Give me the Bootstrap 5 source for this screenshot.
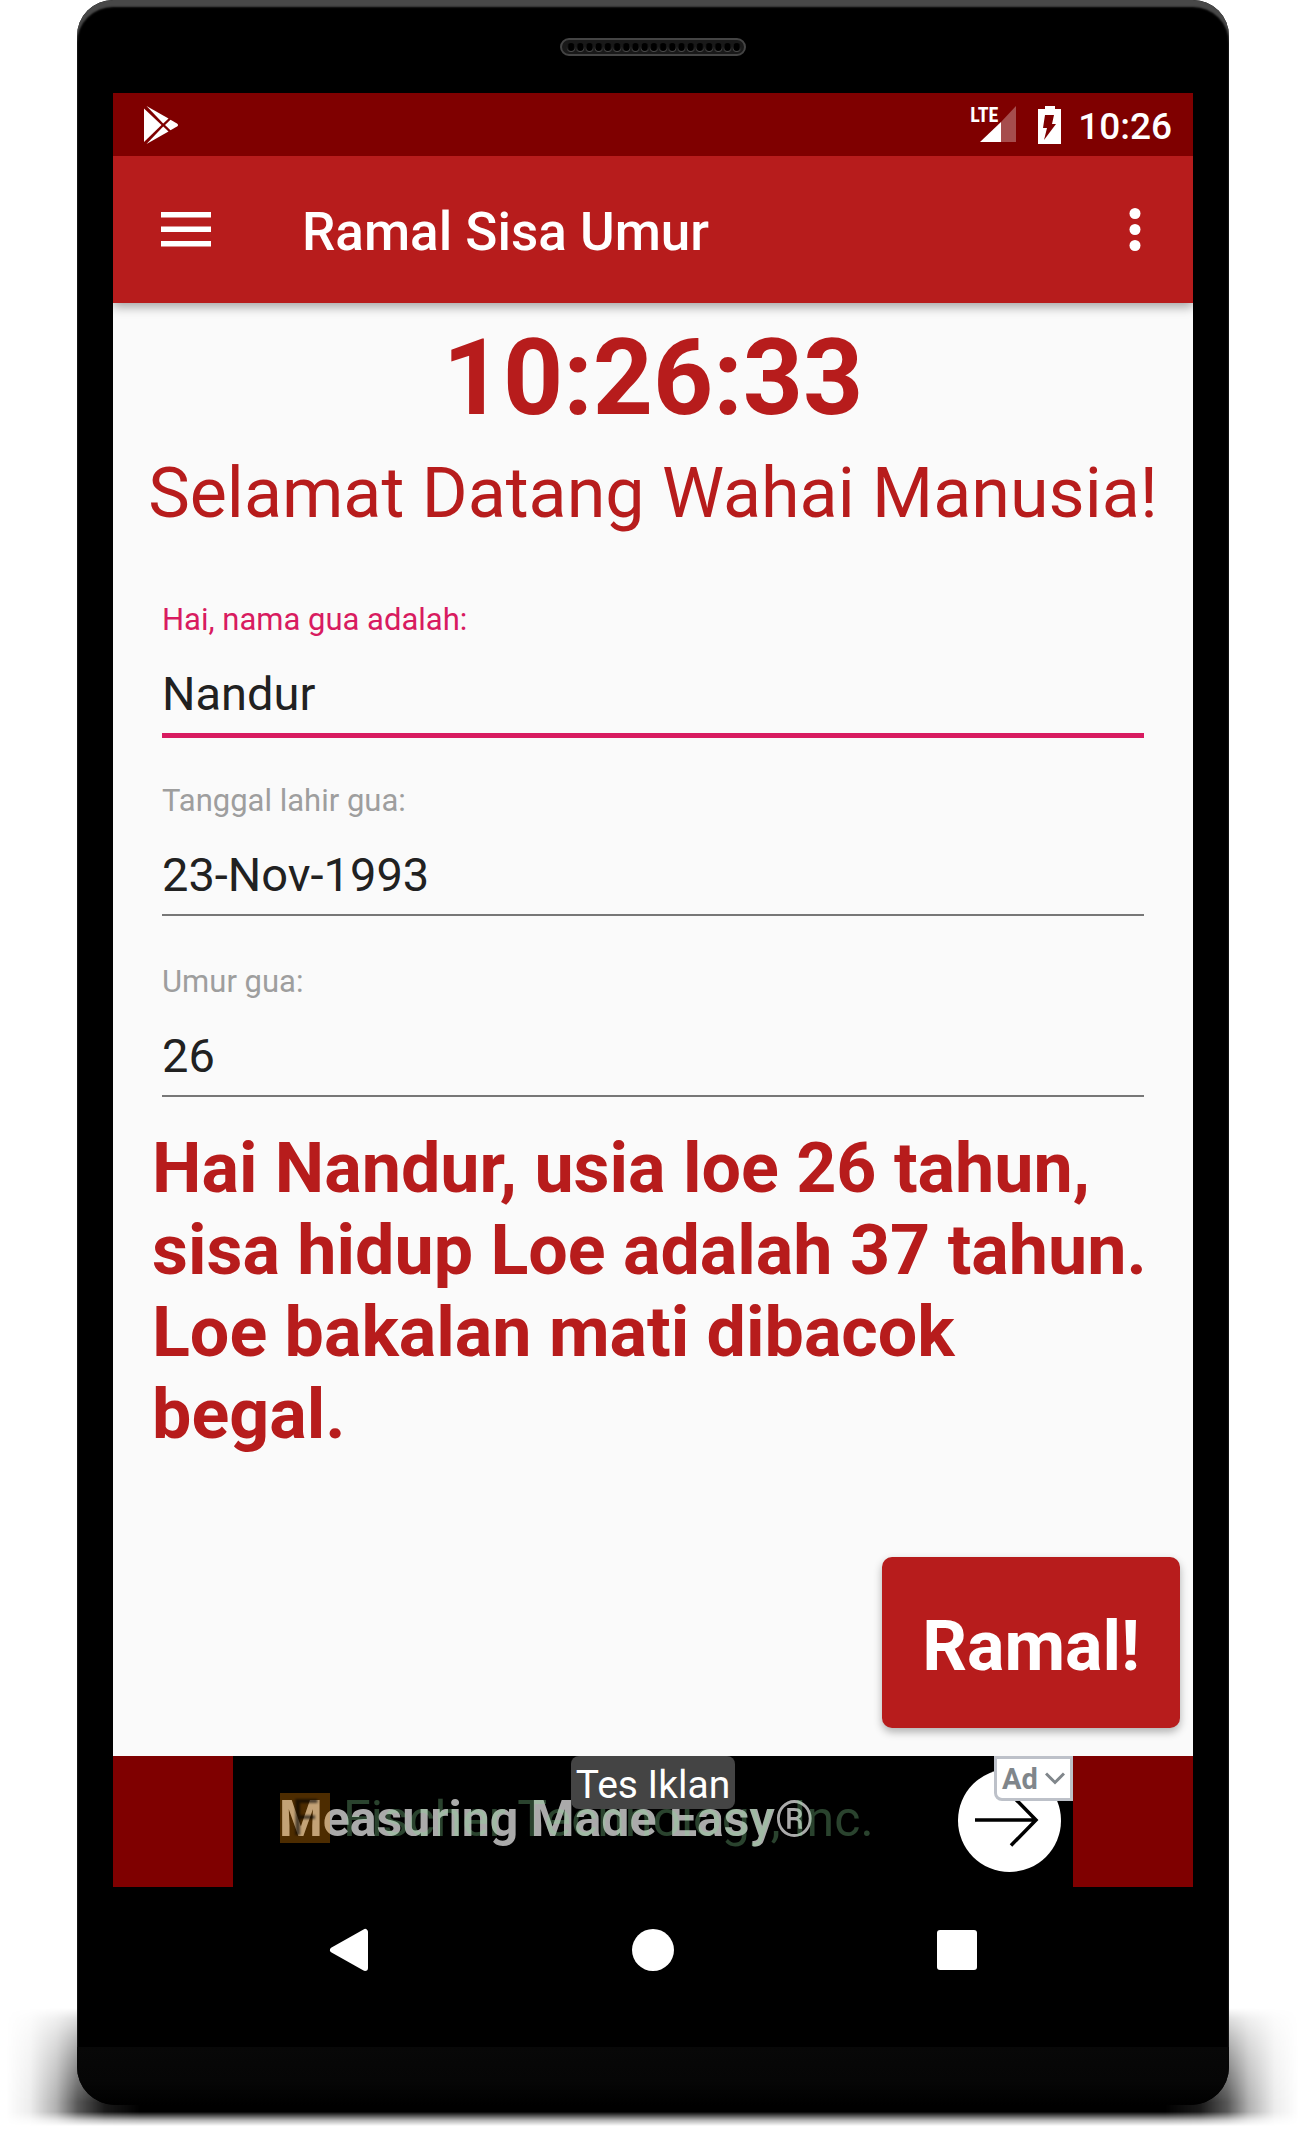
<!DOCTYPE html>
<html lang="id">
<head>
<meta charset="utf-8">
<meta name="viewport" content="width=device-width, initial-scale=1">
<title>Ramal Sisa Umur</title>
<link href="https://cdn.jsdelivr.net/npm/bootstrap@5.3.0/dist/css/bootstrap.min.css" rel="stylesheet">
<style>
  :root { --red: #b71c1c; --maroon: #7f0000; --pink: #d81b60; }
  body { font-family: Roboto, "Liberation Sans", sans-serif; background: #fff; }

  /* Device */
  .stage { min-height: 100vh; padding: 0 76px 25px 77px; }
  .ground-shadow {
    left: 0; right: 0; bottom: 4px; height: 118px;
    background: linear-gradient(to right, transparent 6px, rgba(0,0,0,.07) 30px, rgba(0,0,0,.3) 56px, rgba(0,0,0,.66) 78px, rgba(0,0,0,.9) 105px, #000 140px, #000 calc(100% - 140px), rgba(0,0,0,.9) calc(100% - 105px), rgba(0,0,0,.66) calc(100% - 78px), rgba(0,0,0,.3) calc(100% - 56px), rgba(0,0,0,.07) calc(100% - 30px), transparent calc(100% - 6px));
    -webkit-mask-image: linear-gradient(to bottom, transparent, rgba(0,0,0,.2) 9%, rgba(0,0,0,.42) 25%, rgba(0,0,0,.65) 45%, #000 80%, #000 88%, rgba(0,0,0,.3) 95%, transparent);
    mask-image: linear-gradient(to bottom, transparent, rgba(0,0,0,.2) 9%, rgba(0,0,0,.42) 25%, rgba(0,0,0,.65) 45%, #000 80%, #000 88%, rgba(0,0,0,.3) 95%, transparent);
  }
  .phone { background: #000; border-radius: 36px 36px 38px 38px; box-shadow: inset 0 7px 2px #484848; overflow: hidden; }
  .phone-top { height: 93px; }
  .phone-body { padding: 0 36px; }
  .chin { height: 58px; margin-top: 34px; background: linear-gradient(#080808, #060606 60%, #000); }

  /* System bar */
  .status-row { background: var(--maroon); height: 63px; padding: 0 21px 0 31px; }
  .status-time { font-size: 37px; font-weight: 500; line-height: 44px; padding-top: 5px; }
  .signal { width: 48px; height: 40px; margin-right: 18px; }
  .battery { margin-right: 14px; }
  .signal-tag { font: bold 20px/16px "Liberation Sans Narrow", "Roboto Condensed", Roboto, sans-serif; left: 0; top: 2px; }

  /* App bar */
  .app-row { background: var(--red); height: 147px; padding: 0 40px 0 48px; box-shadow: 0 4px 10px rgba(0,0,0,.35); z-index: 1; clip-path: inset(0 0 -20px 0); }
  .app-title { font-size: 53px; font-weight: 500; line-height: 62px; margin-left: 91px; padding-top: 4px; }
  .plain-btn { background: none; border: 0; padding: 0; line-height: 0; color: #fff; }

  /* Page */
  .page { background: #fafafa; color: var(--red); padding: 14px 13px 28px; }
  .clock { font-size: 105px; font-weight: 700; line-height: 123px; margin: 0 0 12px; }
  .greeting { font-size: 70px; line-height: 82px; margin: 0 0 66px; }
  .fields { margin: 0 36px; }
  .field-item { min-height: 138px; margin-bottom: 43px; }
  .field-item:last-child { margin-bottom: 27px; }
  .field-item label { display: block; font-size: 31px; line-height: 40px; margin-bottom: 26px; color: #9e9e9e; }
  .field-item .form-control, .field-item .form-control:focus {
    font-size: 47px; line-height: 56px; color: #212121; background: none; box-shadow: none;
    border: 0; border-bottom: 2px solid #777; border-radius: 0; padding: 0 0 11px;
  }
  .field-item.is-active label { color: var(--pink); }
  .field-item.is-active .form-control { border-bottom: 5px solid var(--pink); }
  .outcome { font-size: 70px; font-weight: 700; line-height: 82px; margin: 0 26px 60px; }
  .btn-ramal, .btn-ramal:hover {
    background: var(--red); color: #fff; border: 0; border-radius: 10px; font-size: 70px; font-weight: 700;
    line-height: 82px; padding: 48px 40px 41px; box-shadow: 0 4px 8px rgba(0,0,0,.3);
  }

  /* Advert */
  .ad-row { background: var(--maroon); height: 131px; }
  .ad-creative { width: 840px; background: #000; font-size: 50px; line-height: 58px; }
  .ad-line { top: 34px; white-space: nowrap; }
  .ad-main { left: 46px; color: #aaa; font-weight: 700; }
  .ad-main span { font-weight: 400; }
  .ad-second { left: 110px; color: rgba(140,223,153,.3); }
  .ad-letter { left: 47px; top: 37px; width: 50px; height: 50px; line-height: 50px; background: rgba(255,146,0,.3); color: #000; }
  .ad-letter span { opacity: .6; filter: blur(1px); }
  .ad-go { right: 12px; top: 13px; }
  .ad-choice { right: 0; top: 0; width: 79px; height: 45px; border: 3px solid #bdc1c9; border-radius: 0 0 0 8px; background: #fff; color: #80868b; font-size: 29px; font-weight: 700; line-height: 38px; padding: 0 5px; gap: 7px; }
  .ad-toast { top: 0; background: #444; color: #fff; border-radius: 8px; font-size: 39px; line-height: 46px; padding: 6px 5px 1px; white-space: nowrap; }

  .nav-row { height: 126px; padding: 0 215px; }
</style>
</head>
<body>
<div class="stage position-relative d-flex flex-column">
  <div class="ground-shadow position-absolute"></div>
  <div class="phone position-relative flex-grow-1 d-flex flex-column">
    <div class="phone-top d-flex justify-content-center align-items-center">
      <svg width="186" height="18" viewBox="0 0 186 18" aria-hidden="true">
        <defs><pattern id="holes" x="6.5" y="0" width="9.2" height="18" patternUnits="userSpaceOnUse"><circle cx="4.6" cy="10" r="3.9" fill="#4a4a4a"/><ellipse cx="4.6" cy="9" rx="3.5" ry="4" fill="#000"/></pattern></defs>
        <rect x="1" y="1" width="184" height="16" rx="8" fill="#191919" stroke="#444" stroke-width="2"/>
        <rect x="6.5" width="174.8" height="18" fill="url(#holes)"/>
      </svg>
    </div>

    <div class="phone-body flex-grow-1 d-flex flex-column">
      <div class="status-row d-flex align-items-center text-white">
        <svg class="me-auto" width="35" height="38" viewBox="0 0 35 38" fill="#fff" aria-hidden="true">
          <path d="M0 2.5 17.5 19 0 36z"/><path d="M2.5 0 24.5 12.6 19.2 17.6z"/><path d="M2.5 38 24.5 25.4 19.2 20.4z"/><path d="M26.5 13.8 33 17.4q2 1.6 0 3.2L26.5 24.2 21 19z"/>
        </svg>
        <div class="signal position-relative">
          <svg class="d-block" width="48" height="40" viewBox="0 0 48 40" aria-hidden="true"><path d="M46 1v36H31V17z" fill="#a64d4d"/><path d="M31 17v20H10z" fill="#fff"/></svg>
          <span class="signal-tag position-absolute">LTE</span>
        </div>
        <svg class="battery" width="28" height="40" viewBox="0 0 28 40" aria-hidden="true"><path d="M9 1h10v3h6v35H2V4h7z" fill="#fff"/><path d="M9 10h9l-2 9h4L8 35l3-12H7z" fill="#7f0000"/></svg>
        <span class="status-time">10:26</span>
      </div>

      <header class="app-row d-flex align-items-center text-white position-relative">
        <button class="plain-btn" type="button" aria-label="Menu">
          <svg width="50" height="36" viewBox="0 0 50 36" fill="#fff"><path d="M0 0h50v5.500H0zM0 14.500h50V20H0zM0 29h50v5.500H0z"/></svg>
        </button>
        <h1 class="app-title mb-0 me-auto">Ramal Sisa Umur</h1>
        <button class="plain-btn" type="button" aria-label="Opsi lainnya">
          <svg width="36" height="44" viewBox="0 0 36 44" fill="#fff"><circle cx="18" cy="5.500" r="5.500"/><circle cx="18" cy="21.500" r="5.500"/><circle cx="18" cy="37.500" r="5.500"/></svg>
        </button>
      </header>

      <main class="page flex-grow-1 d-flex flex-column">
        <p class="clock text-center">10:26:33</p>
        <h2 class="greeting text-center fw-normal">Selamat Datang Wahai Manusia!</h2>
        <div class="fields">
          <div class="field-item is-active">
            <label for="nama">Hai, nama gua adalah:</label>
            <input class="form-control" id="nama" type="text" value="Nandur">
          </div>
          <div class="field-item">
            <label for="lahir">Tanggal lahir gua:</label>
            <input class="form-control" id="lahir" type="text" value="23-Nov-1993">
          </div>
          <div class="field-item">
            <label for="umur">Umur gua:</label>
            <input class="form-control" id="umur" type="text" value="26">
          </div>
        </div>
        <p class="outcome">Hai Nandur, usia loe 26 tahun, sisa hidup Loe adalah 37 tahun. Loe bakalan mati dibacok begal.</p>
        <button class="btn btn-ramal align-self-end mt-auto" type="button">Ramal!</button>
      </main>

      <div class="ad-row position-relative d-flex justify-content-center">
        <a class="ad-creative position-relative text-decoration-none overflow-hidden" href="#">
          <span class="ad-line ad-main position-absolute">Measuring Made Easy<span>®</span></span>
          <span class="ad-line ad-second position-absolute">Fischer Technology, Inc.</span>
          <span class="ad-letter position-absolute text-center"><span class="d-block">F</span></span>
          <svg class="ad-go position-absolute" width="103" height="103" viewBox="0 0 103 103" aria-hidden="true"><circle cx="51.5" cy="51.5" r="51.5" fill="#fff"/><path d="M17 51h61M53 25.500l25 25.500-25 25.500" fill="none" stroke="#000" stroke-width="3.500"/></svg>
          <span class="ad-choice position-absolute d-flex align-items-center">Ad
            <svg width="20" height="13" viewBox="0 0 20 13" fill="none" stroke="#80868b" stroke-width="3" aria-hidden="true"><path d="m1 1.500 9 9 9-9"/></svg>
          </span>
        </a>
        <span class="ad-toast position-absolute">Tes Iklan</span>
      </div>

      <nav class="nav-row d-flex justify-content-between align-items-center">
        <button class="plain-btn" type="button" aria-label="Kembali"><svg width="42" height="44" viewBox="0 0 42 44"><path d="M37 4v36L5 22z" fill="#fff" stroke="#fff" stroke-width="6" stroke-linejoin="round"/></svg></button>
        <button class="plain-btn" type="button" aria-label="Beranda"><svg width="42" height="42" viewBox="0 0 42 42"><circle cx="21" cy="21" r="21" fill="#fff"/></svg></button>
        <button class="plain-btn" type="button" aria-label="Terkini"><svg width="42" height="42" viewBox="0 0 42 42"><rect x="1" y="1" width="40" height="40" rx="3" fill="#fff"/></svg></button>
      </nav>
    </div>
    <div class="chin"></div>
  </div>
</div>
<script src="https://cdn.jsdelivr.net/npm/bootstrap@5.3.0/dist/js/bootstrap.bundle.min.js"></script>
</body>
</html>
